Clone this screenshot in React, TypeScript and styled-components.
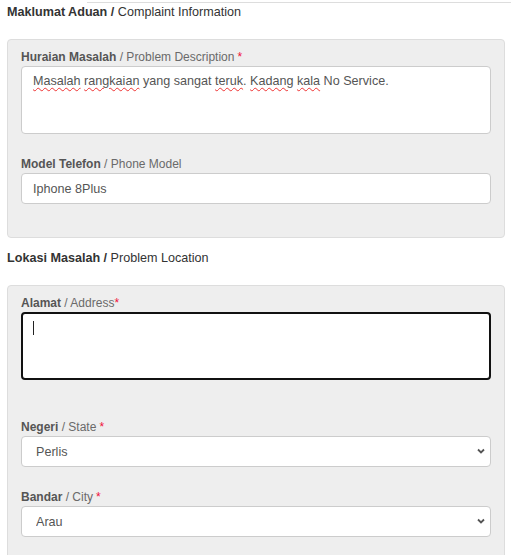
import React from 'react';
import styled, { createGlobalStyle } from 'styled-components';

const GlobalStyle = createGlobalStyle`
    body {
        margin: 0;
        background: #fff;
        font-family: "Liberation Sans", Arial, sans-serif;
        color: #333;
    }
`

const Page = styled.div`
    width: 511px;
    box-sizing: border-box;
    padding: 0 6px 0 7px;
`

const TopRule = styled.div`
    margin: 2px -6px 0 80px;
    border-top: 1px solid #ddd;
`

const SectionTitle = styled.h3<{ $first?: boolean }>`
    margin: ${p => (p.$first ? '0' : '11px')} 0 18px;
    font-size: 12.6px;
    line-height: 18px;
    font-weight: normal;
    color: #333;
    b {
        font-weight: bold;
    }
`

const Panel = styled.div`
    background: #eee;
    border: 1px solid #ddd;
    border-radius: 4px;
    padding: 10px 13px 10px;
`

const FormGroup = styled.div<{ $space?: number }>`
    margin-bottom: ${p => p.$space ?? 23}px;
`

const Label = styled.label`
    display: block;
    margin-bottom: 2px;
    font-size: 12px;
    line-height: 14px;
    font-weight: bold;
    color: #555;
`

const Hint = styled.span`
    font-weight: normal;
    color: #6a6a6a;
`

const Required = styled.span<{ $tight?: boolean }>`
    margin-left: ${p => (p.$tight ? '0' : '3px')};
    font-weight: normal;
    color: #f0113a;
`

const TextBox = styled.div<{ $focused?: boolean }>`
    box-sizing: border-box;
    height: 68px;
    padding: ${p => (p.$focused ? '5px 10px' : '6px 11px')};
    background: #fff;
    border: ${p => (p.$focused ? '2px solid #111' : '1px solid #ccc')};
    border-radius: 4px;
    font-size: 12.6px;
    line-height: 17px;
    color: #555;
`

const Misspelt = styled.span`
    text-decoration: underline wavy #e33;
    text-decoration-thickness: 1px;
    text-underline-offset: 2px;
`

const Caret = styled.span`
    display: inline-block;
    width: 1px;
    height: 14px;
    margin-top: 2px;
    background: #222;
    vertical-align: top;
`

const Input = styled.input`
    display: block;
    box-sizing: border-box;
    width: 100%;
    height: 31px;
    padding: 0 11px;
    background: #fff;
    border: 1px solid #ccc;
    border-radius: 4px;
    font-family: inherit;
    font-size: 12.6px;
    color: #555;
    outline: none;
`

const SelectWrap = styled.div`
    position: relative;
`

const Select = styled.select`
    display: block;
    box-sizing: border-box;
    width: 100%;
    height: 31px;
    padding: 0 11px 0 14px;
    appearance: none;
    background: #fff;
    border: 1px solid #ccc;
    border-radius: 4px;
    font-family: inherit;
    font-size: 12.6px;
    color: #555;
    outline: none;
`

const Chevron = styled.svg`
    position: absolute;
    right: 6px;
    top: 12px;
    pointer-events: none;
`

const Arrow = () => (
    <Chevron width="8" height="6" viewBox="0 0 8 6">
        <path d="M1 1.5 L4 4.5 L7 1.5" fill="none" stroke="#555" strokeWidth="1.8" />
    </Chevron>
)

const App: React.FC = () => {
    return (
        <Page>
            <GlobalStyle />
            <TopRule />
            <SectionTitle $first>
                <b>Maklumat Aduan /</b> Complaint Information
            </SectionTitle>
            <Panel>
                <FormGroup>
                    <Label>
                        Huraian Masalah <Hint>/ Problem Description</Hint>
                        <Required>*</Required>
                    </Label>
                    <TextBox role="textbox">
                        <Misspelt>Masalah</Misspelt> <Misspelt>rangkaian</Misspelt> yang sangat{' '}
                        <Misspelt>teruk</Misspelt>. <Misspelt>Kadang</Misspelt> <Misspelt>kala</Misspelt> No
                        Service.
                    </TextBox>
                </FormGroup>
                <FormGroup>
                    <Label>
                        Model Telefon <Hint>/ Phone Model</Hint>
                    </Label>
                    <Input defaultValue="Iphone 8Plus" />
                </FormGroup>
            </Panel>

            <SectionTitle>
                <b>Lokasi Masalah /</b> Problem Location
            </SectionTitle>
            <Panel>
                <FormGroup $space={40}>
                    <Label>
                        Alamat <Hint>/ Address</Hint>
                        <Required $tight>*</Required>
                    </Label>
                    <TextBox role="textbox" $focused>
                        <Caret />
                    </TextBox>
                </FormGroup>
                <FormGroup>
                    <Label>
                        Negeri <Hint>/ State</Hint>
                        <Required>*</Required>
                    </Label>
                    <SelectWrap>
                        <Select defaultValue="Perlis">
                            <option>Perlis</option>
                            <option>Kedah</option>
                            <option>Pulau Pinang</option>
                        </Select>
                        <Arrow />
                    </SelectWrap>
                </FormGroup>
                <FormGroup>
                    <Label>
                        Bandar <Hint>/ City</Hint>
                        <Required>*</Required>
                    </Label>
                    <SelectWrap>
                        <Select defaultValue="Arau">
                            <option>Arau</option>
                            <option>Kangar</option>
                            <option>Padang Besar</option>
                        </Select>
                        <Arrow />
                    </SelectWrap>
                </FormGroup>
            </Panel>
        </Page>
    );
}

export default App;
